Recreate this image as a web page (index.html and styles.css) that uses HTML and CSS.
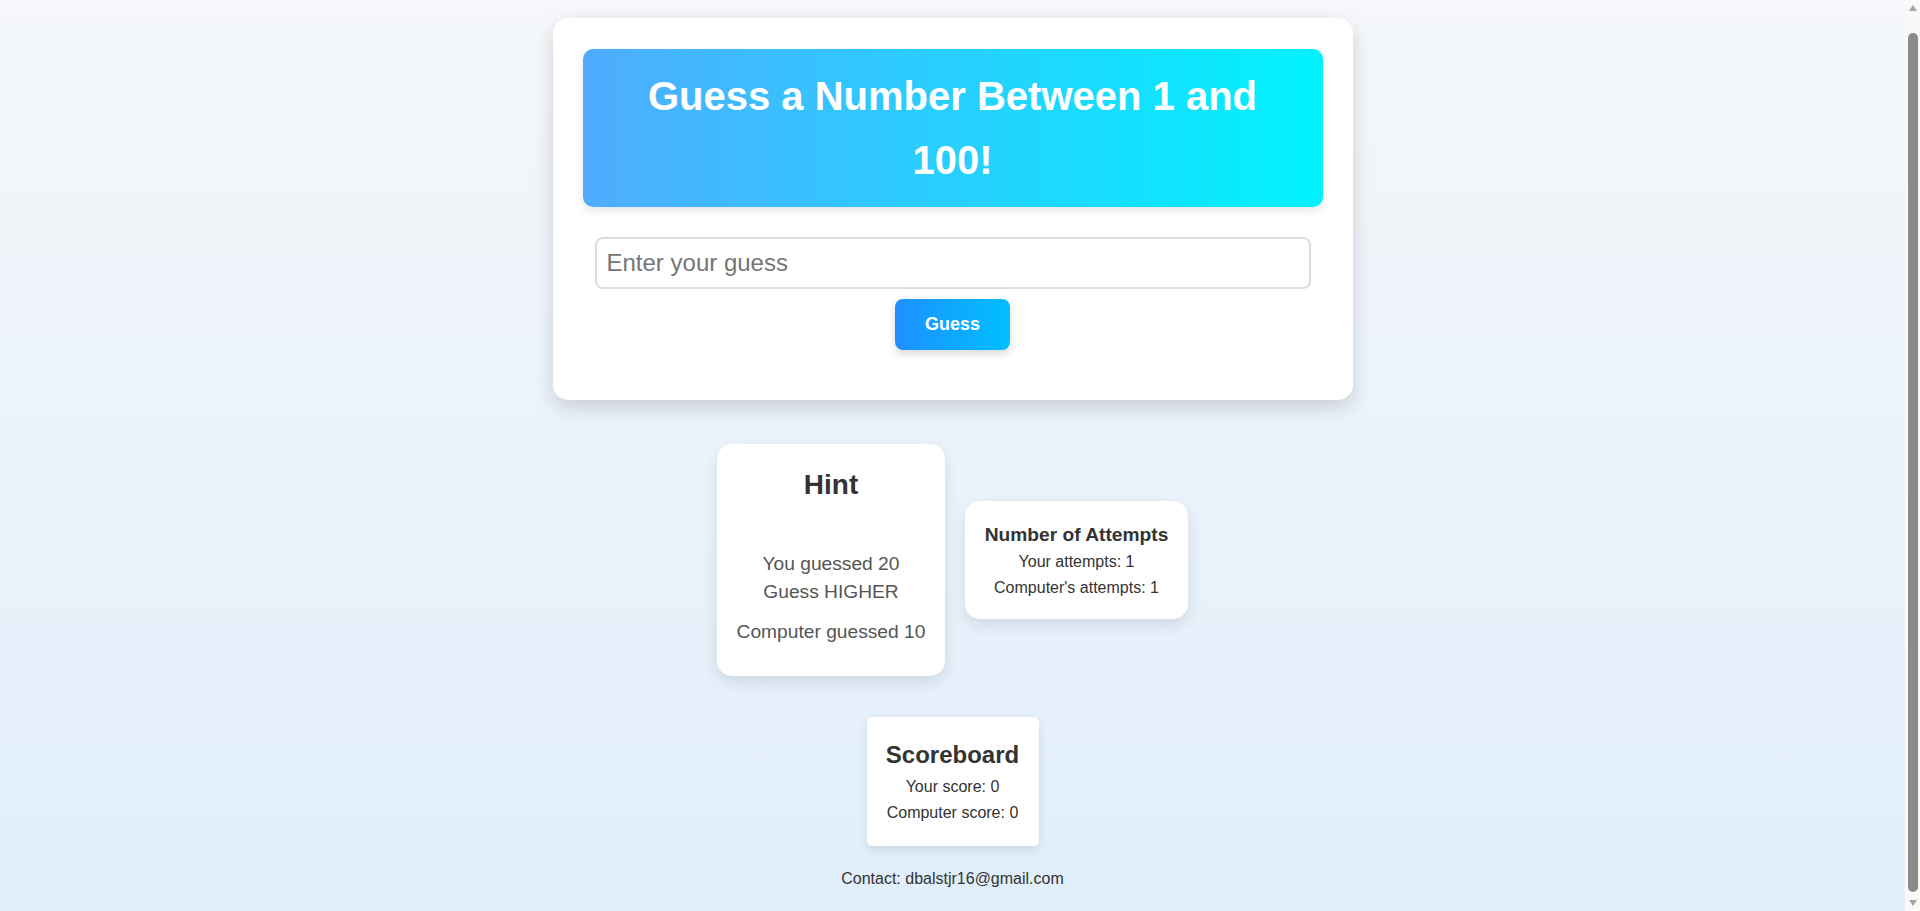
FILE: index.html
```html
<!DOCTYPE html>
<html lang="en">
<head>
<meta charset="utf-8">
<title>Guess a Number</title>
<link rel="stylesheet" href="styles.css">
</head>
<body>
  <div class="game-card">
    <h1 class="game-title">Guess a Number Between 1 and 100!</h1>
    <input class="guess-input" type="text" placeholder="Enter your guess">
    <button class="guess-btn" type="button">Guess</button>
  </div>

  <div class="info-row">
    <div class="hint-card">
      <h2 class="hint-title">Hint</h2>
      <p class="hint-msg">You guessed 20<br>Guess HIGHER</p>
      <p class="hint-computer">Computer guessed 10</p>
    </div>
    <div class="attempts-card">
      <h3 class="attempts-title">Number of Attempts</h3>
      <p class="attempts-line first">Your attempts: 1</p>
      <p class="attempts-line">Computer's attempts: 1</p>
    </div>
  </div>

  <div class="score-card">
    <h2 class="score-title">Scoreboard</h2>
    <p class="score-line first">Your score: 0</p>
    <p class="score-line">Computer score: 0</p>
  </div>

  <p class="contact">Contact: dbalstjr16@gmail.com</p>

  <div class="fake-scrollbar" aria-hidden="true">
    <span class="sb-arrow sb-up"></span>
    <span class="sb-thumb"></span>
    <span class="sb-arrow sb-down"></span>
  </div>
</body>
</html>
```

FILE: styles.css
```css
html {
  background: linear-gradient(to bottom, #f5f7fa, #e0eefb);
  min-height: 100%;
}

body {
  margin: 0;
  padding: 18px 15px 45px 0;
  font-family: "Liberation Sans", Arial, sans-serif;
  color: #333;
  text-align: center;
}

.game-card {
  width: 800px;
  box-sizing: border-box;
  margin: 0 auto;
  padding: 31px 30px 50px;
  background: #fff;
  border-radius: 15px;
  box-shadow: 0 8px 20px rgba(0, 0, 0, 0.15);
}

.game-title {
  margin: 0;
  padding: 15px 30px;
  font-size: 40px;
  line-height: 64px;
  font-weight: bold;
  color: #fff;
  background: linear-gradient(to right, #4facfe, #00f2fe);
  border-radius: 10px;
  box-shadow: 0 4px 10px rgba(0, 0, 0, 0.1);
}

.guess-input {
  display: block;
  box-sizing: border-box;
  width: calc(100% - 24px);
  margin: 30px auto 0;
  padding: 10px;
  border: 2px solid #ddd;
  border-radius: 8px;
  font-family: "Liberation Sans", Arial, sans-serif;
  font-size: 24px;
  color: #333;
  background: #fff;
  outline: none;
}

.guess-input::placeholder {
  color: #757575;
}

.guess-btn {
  margin-top: 10px;
  padding: 15px 30px;
  font-family: "Liberation Sans", Arial, sans-serif;
  font-size: 18px;
  font-weight: bold;
  color: #fff;
  border: none;
  border-radius: 8px;
  background: linear-gradient(to right, #1e90ff, #00bfff);
  box-shadow: 0 4px 8px rgba(0, 0, 0, 0.15);
  cursor: pointer;
}

.info-row {
  display: flex;
  justify-content: center;
  align-items: center;
  gap: 20px;
  margin-top: 44px;
}

.hint-card {
  width: 228px;
  box-sizing: border-box;
  padding: 25px 10px 30px;
  background: #fff;
  border-radius: 15px;
  box-shadow: 0 6px 15px rgba(0, 0, 0, 0.1);
}

.hint-title {
  margin: 0;
  font-size: 28px;
  line-height: 32px;
  color: #333;
}

.hint-msg {
  margin: 49px 0 0;
  font-size: 19.2px;
  line-height: 28px;
  color: #555;
}

.hint-computer {
  margin: 12px 0 0;
  font-size: 19.2px;
  line-height: 28px;
  color: #555;
}

.attempts-card {
  width: 223px;
  box-sizing: border-box;
  padding: 23px 10px 18px;
  background: #fff;
  border-radius: 15px;
  box-shadow: 0 6px 15px rgba(0, 0, 0, 0.1);
}

.attempts-title {
  margin: 0;
  font-size: 19.2px;
  line-height: 22px;
  color: #333;
}

.attempts-line {
  margin: 0;
  font-size: 16px;
  line-height: 26px;
  color: #333;
}

.attempts-line.first {
  margin-top: 3px;
}

.score-card {
  width: 172px;
  box-sizing: border-box;
  margin: 41px auto 0;
  padding: 24px 10px 20px;
  background: #fff;
  border-radius: 5px;
  box-shadow: 0 4px 10px rgba(0, 0, 0, 0.1);
}

.score-title {
  margin: 0;
  font-size: 24px;
  line-height: 28px;
  color: #333;
}

.score-line {
  margin: 0;
  font-size: 16px;
  line-height: 26px;
  color: #333;
}

.score-line.first {
  margin-top: 5px;
}

.contact {
  margin: 24px 0 0;
  font-size: 16px;
  line-height: 18px;
  color: #333;
}

/* decorative replica of the browser scrollbar seen in the reference */
.fake-scrollbar {
  position: fixed;
  top: 0;
  right: 0;
  width: 15px;
  height: 100vh;
  background: #f9f9f9;
  display: flex;
  flex-direction: column;
  align-items: center;
}

.sb-arrow {
  width: 0;
  height: 0;
  border-left: 4.5px solid transparent;
  border-right: 4.5px solid transparent;
  flex: none;
}

.sb-up {
  margin-top: 5px;
  border-bottom: 6px solid #a3a3a3;
}

.sb-down {
  margin-bottom: 5px;
  border-top: 6px solid #a3a3a3;
}

.sb-thumb {
  flex: 1;
  width: 10px;
  margin: 22px 0 8px;
  background: #8b8b8b;
  border-radius: 5px;
}
```
